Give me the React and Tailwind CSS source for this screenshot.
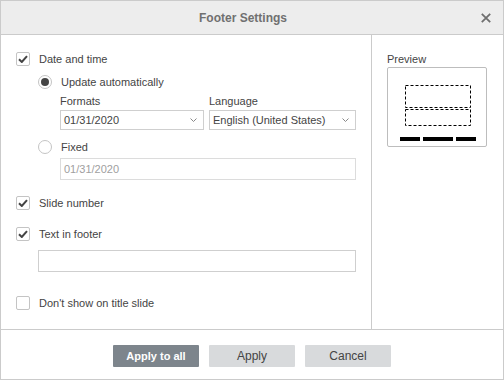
import React from 'react';

const CheckMark = () => (
  <svg width="10" height="8" viewBox="0 0 10 8">
    <path d="M1 4.2l2.8 2.8L9 1.2" fill="none" stroke="#444" strokeWidth="2" />
  </svg>
);

const Chevron = () => (
  <svg width="7" height="4" viewBox="0 0 7 4" className="absolute right-[6px] top-1/2 -translate-y-1/2">
    <path d="M0.5 0.5L3.5 3.5L6.5 0.5" fill="none" stroke="#888" strokeWidth="1" />
  </svg>
);

function Checkbox({ checked, label }) {
  return (
    <div className="flex items-center h-[14px]">
      <span className="w-[14px] h-[14px] border border-[#c4c4c4] rounded-[2px] bg-white flex items-center justify-center">
        {checked && <CheckMark />}
      </span>
      <span className="ml-[9px]">{label}</span>
    </div>
  );
}

function Radio({ checked, label }) {
  return (
    <div className="flex items-center h-[14px]">
      <span className="w-[14px] h-[14px] rounded-full border border-[#c4c4c4] bg-white flex items-center justify-center">
        {checked && <span className="w-[8px] h-[8px] rounded-full bg-[#444]" />}
      </span>
      <span className="ml-[9px]">{label}</span>
    </div>
  );
}

function Select({ value, width }) {
  return (
    <div className={`relative h-[20px] border border-[#cfcfcf] bg-white pl-[3px] flex items-center ${width}`}>
      <span>{value}</span>
      <Chevron />
    </div>
  );
}

export default function App() {
  return (
    <div className="w-[504px] h-[380px] bg-white border border-[#cbcbcb] flex flex-col font-['Liberation_Sans',Arial,sans-serif] text-[11px] text-[#444] leading-[14px]">
      {/* Header */}
      <div className="relative h-[34px] shrink-0 bg-[#ededed] border-b border-[#cbcbcb] flex items-center justify-center pr-[18px]">
        <span className="text-[12px] font-bold text-[#707070]">Footer Settings</span>
        <svg width="10" height="10" viewBox="0 0 10 10" className="absolute right-[12px] top-[12px]">
          <path d="M0.8 0.8L9.2 9.2M9.2 0.8L0.8 9.2" stroke="#6f6f6f" strokeWidth="1.8" />
        </svg>
      </div>

      {/* Body */}
      <div className="flex-1 flex min-h-0">
        <div className="w-[371px] border-r border-[#cbcbcb] pl-[15px] flex flex-col">
          <div className="mt-[17px]">
            <Checkbox checked label="Date and time" />
          </div>
          <div className="ml-[22px] mt-[9px]">
            <Radio checked label="Update automatically" />
          </div>
          <div className="ml-[44px] mt-[5px] flex gap-[5px]">
            <div className="flex flex-col gap-[2px]">
              <span>Formats</span>
              <Select value="01/31/2020" width="w-[144px]" />
            </div>
            <div className="flex flex-col gap-[2px]">
              <span>Language</span>
              <Select value="English (United States)" width="w-[147px]" />
            </div>
          </div>
          <div className="ml-[22px] mt-[10px]">
            <Radio label="Fixed" />
          </div>
          <div className="ml-[44px] mt-[4px] w-[296px] h-[22px] border border-[#dcdcdc] pl-[3px] flex items-center text-[#a0a0a0]">
            01/31/2020
          </div>
          <div className="mt-[16px]">
            <Checkbox checked label="Slide number" />
          </div>
          <div className="mt-[17px]">
            <Checkbox checked label="Text in footer" />
          </div>
          <div className="ml-[22px] mt-[9px] w-[318px] h-[22px] border border-[#cfcfcf] bg-white" />
          <div className="mt-[24px]">
            <Checkbox label="Don't show on title slide" />
          </div>
        </div>

        <div className="flex-1 pl-[15px] flex flex-col">
          <span className="mt-[17px]">Preview</span>
          <div className="mt-[1px] w-[100px] h-[80px] border border-[#bdbdbd] rounded-[2px] bg-white">
            <svg width="98" height="78" viewBox="0 0 98 78">
              <g fill="none" stroke="#000" strokeWidth="1" strokeDasharray="3 2">
                <rect x="17.5" y="17.5" width="65" height="22" />
                <rect x="17.5" y="41.5" width="65" height="16" />
              </g>
              <rect x="12" y="69" width="20" height="4" fill="#000" />
              <rect x="35" y="69" width="30" height="4" fill="#000" />
              <rect x="68" y="69" width="20" height="4" fill="#000" />
            </svg>
          </div>
        </div>
      </div>

      {/* Footer */}
      <div className="h-[50px] shrink-0 border-t border-[#cbcbcb] flex justify-center items-start pt-[15px] gap-[10px]">
        <button className="w-[86px] h-[22px] bg-[#7d858c] text-white text-[11px] font-bold rounded-[1px]">Apply to all</button>
        <button className="w-[86px] h-[22px] bg-[#d8dadc] text-[#444] text-[12px] rounded-[1px]">Apply</button>
        <button className="w-[86px] h-[22px] bg-[#d8dadc] text-[#444] text-[12px] rounded-[1px]">Cancel</button>
      </div>
    </div>
  );
}
